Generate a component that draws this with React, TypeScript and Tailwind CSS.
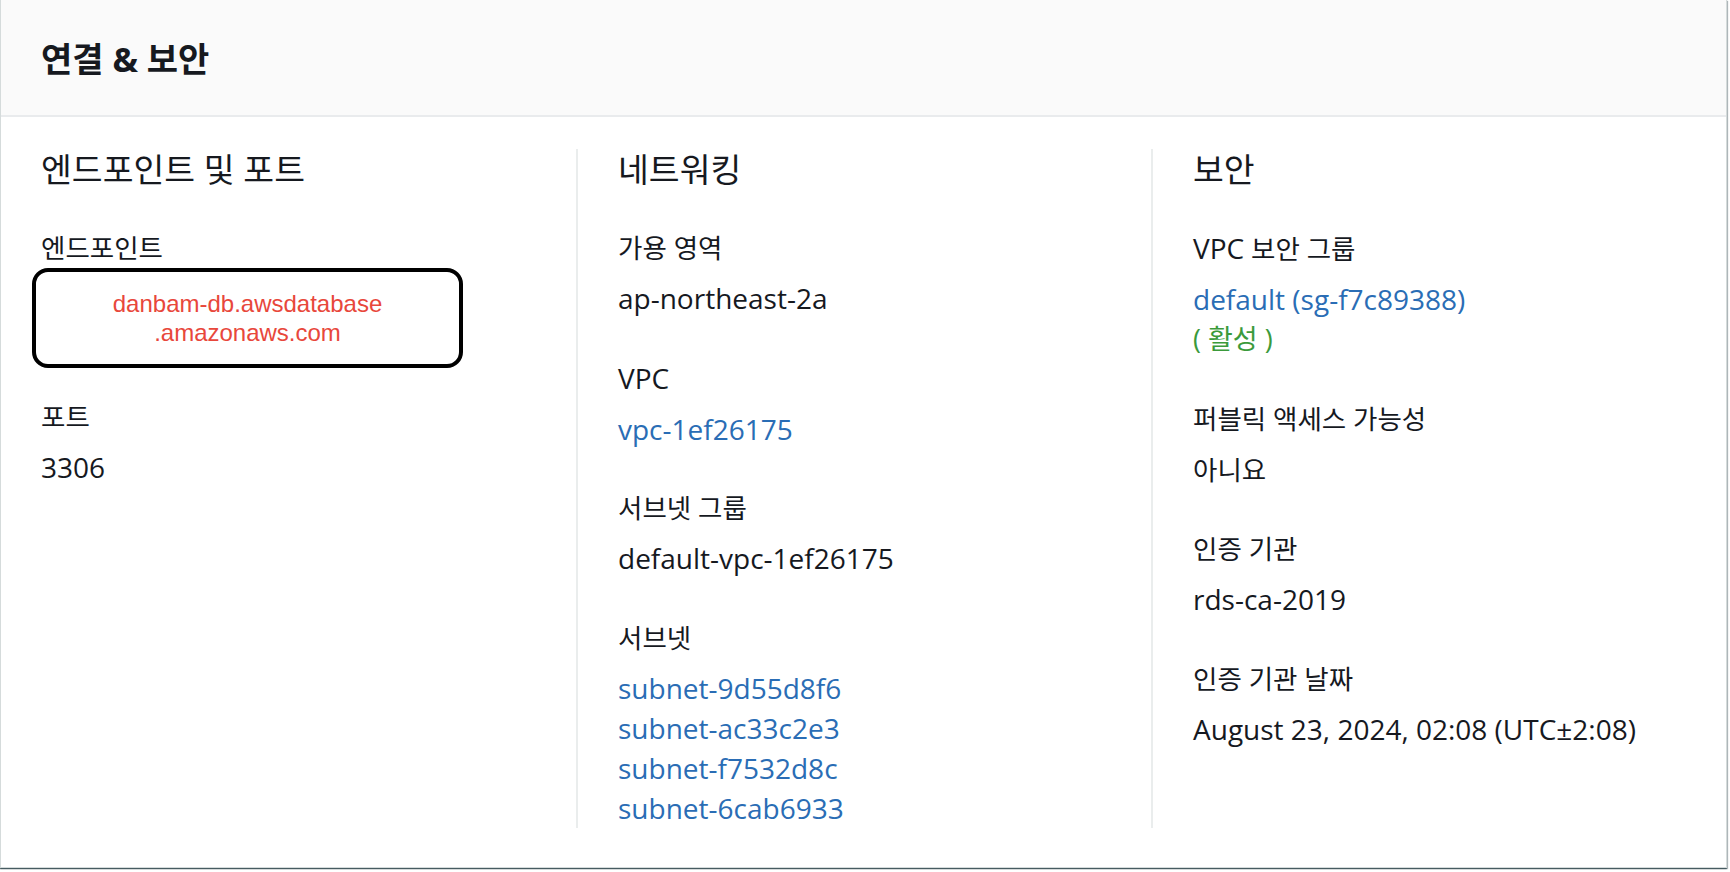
import type { ReactNode } from "react";

const FONT = "font-['Open_Sans','Noto_Sans_CJK_KR',sans-serif]";

function Label({ children }: { children: ReactNode }) {
  return <div className="text-[26.5px] leading-[40px] text-[#16191f]">{children}</div>;
}

function Value({ children, link }: { children: ReactNode; link?: boolean }) {
  return (
    <div className={`text-[28px] leading-[40px] ${link ? "text-[#2a6db5]" : "text-[#16191f]"}`}>
      {children}
    </div>
  );
}

function Field({ label, children, first }: { label: ReactNode; children: ReactNode; first?: boolean }) {
  return (
    <div className={first ? "mt-[39px]" : "mt-[39.5px]"}>
      <Label>{label}</Label>
      <div className="mt-[10px]">{children}</div>
    </div>
  );
}

function Column({ title, children, divider }: { title: string; children: ReactNode; divider?: boolean }) {
  return (
    <div className={`flex flex-col pl-10 ${divider ? "border-l-2 border-[#eaeded]" : ""}`}>
      <h3 className="text-[33.5px] leading-[40px] font-normal text-[#16191f]">{title}</h3>
      {children}
    </div>
  );
}

export default function App() {
  return (
    <div className={`min-h-screen bg-white ${FONT}`}>
      <div className="w-[1727px] border border-t-0 border-[#d5dbdb] bg-white shadow-[0_1px_1px_0_rgba(0,28,36,0.5),1px_1px_1px_0_rgba(0,28,36,0.25),-1px_1px_1px_0_rgba(0,28,36,0.25)]">
        <div className="flex h-[117px] items-center border-b-2 border-[#e9ebed] bg-[#fafafa] px-10 pt-[4px]">
          <h2 className="text-[34px] font-bold text-[#16191f]">연결 &amp; 보안</h2>
        </div>

        <div className="grid grid-cols-3 pt-[32px] pb-[39px]">
          <Column title="엔드포인트 및 포트">
            <div className="mt-[39px]">
              <Label>엔드포인트</Label>
              <div className="-ml-[9px] flex h-[100px] w-[431px] flex-col items-center justify-center rounded-[16px] border-4 border-black font-['Liberation_Sans',Arial,sans-serif] text-[24px] leading-[29px] text-[#e8473b]">
                <span>danbam-db.awsdatabase</span>
                <span>.amazonaws.com</span>
              </div>
            </div>
            <div className="mt-[29px]">
              <Label>포트</Label>
              <div className="mt-[10px]">
                <Value>3306</Value>
              </div>
            </div>
          </Column>

          <Column title="네트워킹" divider>
            <Field label="가용 영역" first>
              <Value>ap-northeast-2a</Value>
            </Field>
            <Field label={<span className="text-[28px]">VPC</span>}>
              <Value link>vpc-1ef26175</Value>
            </Field>
            <Field label="서브넷 그룹">
              <Value>default-vpc-1ef26175</Value>
            </Field>
            <Field label="서브넷">
              <Value link>subnet-9d55d8f6</Value>
              <Value link>subnet-ac33c2e3</Value>
              <Value link>subnet-f7532d8c</Value>
              <Value link>subnet-6cab6933</Value>
            </Field>
          </Column>

          <Column title="보안" divider>
            <Field
              label={
                <>
                  <span className="text-[28px]">VPC</span> 보안 그룹
                </>
              }
              first
            >
              <Value link>default (sg-f7c89388)</Value>
              <div className="text-[27px] leading-[40px] text-[#3b9a3b]">( 활성 )</div>
            </Field>
            <Field label="퍼블릭 액세스 가능성">
              <Value>
                <span className="text-[26.5px]">아니요</span>
              </Value>
            </Field>
            <Field label="인증 기관">
              <Value>rds-ca-2019</Value>
            </Field>
            <Field label="인증 기관 날짜">
              <Value>August 23, 2024, 02:08 (UTC±2:08)</Value>
            </Field>
          </Column>
        </div>
      </div>
    </div>
  );
}
